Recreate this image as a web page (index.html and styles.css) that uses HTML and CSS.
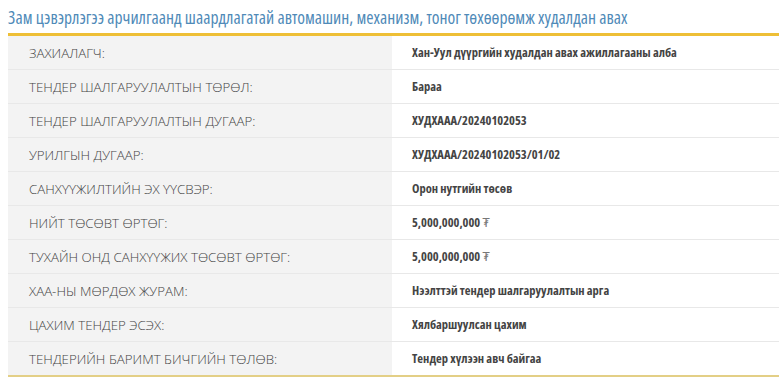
FILE: index.html
```html
<!DOCTYPE html>
<html lang="mn">
<head>
<meta charset="utf-8">
<link rel="stylesheet" href="styles.css">
</head>
<body>
<h2 class="title">Зам цэвэрлэгээ арчилгаанд шаардлагатай автомашин, механизм, тоног төхөөрөмж худалдан авах</h2>
<div class="info">
  <div class="row"><div class="label">ЗАХИАЛАГЧ:</div><div class="value">Хан-Уул дүүргийн худалдан авах ажиллагааны алба</div></div>
  <div class="row"><div class="label">ТЕНДЕР ШАЛГАРУУЛАЛТЫН ТӨРӨЛ:</div><div class="value">Бараа</div></div>
  <div class="row"><div class="label">ТЕНДЕР ШАЛГАРУУЛАЛТЫН ДУГААР:</div><div class="value">ХУДХААА/20240102053</div></div>
  <div class="row"><div class="label">УРИЛГЫН ДУГААР:</div><div class="value">ХУДХААА/20240102053/01/02</div></div>
  <div class="row"><div class="label">САНХҮҮЖИЛТИЙН ЭХ ҮҮСВЭР:</div><div class="value">Орон нутгийн төсөв</div></div>
  <div class="row"><div class="label">НИЙТ ТӨСӨВТ ӨРТӨГ:</div><div class="value">5,000,000,000 <span class="cur">₮</span></div></div>
  <div class="row"><div class="label">ТУХАЙН ОНД САНХҮҮЖИХ ТӨСӨВТ ӨРТӨГ:</div><div class="value">5,000,000,000 <span class="cur">₮</span></div></div>
  <div class="row"><div class="label">ХАА-НЫ МӨРДӨХ ЖУРАМ:</div><div class="value">Нээлттэй тендер шалгаруулалтын арга</div></div>
  <div class="row"><div class="label">ЦАХИМ ТЕНДЕР ЭСЭХ:</div><div class="value">Хялбаршуулсан цахим</div></div>
  <div class="row"><div class="label">ТЕНДЕРИЙН БАРИМТ БИЧГИЙН ТӨЛӨВ:</div><div class="value">Тендер хүлээн авч байгаа</div></div>
</div>
</body>
</html>
```
FILE: styles.css
```css
html, body {
  margin: 0;
  padding: 0;
  background: #ffffff;
}
body {
  padding: 0 0 0 8px;
  font-family: "Open Sans", "DejaVu Sans Condensed", sans-serif;
  font-stretch: 75%;
  overflow: hidden;
}
.title {
  margin: 0;
  padding-top: 7px;
  height: 26px;
  font-size: 17.6px;
  font-weight: 400;
  color: #4f8ab8;
  white-space: nowrap;
  line-height: 20px;
}
.info {
  border-top: 3px solid #eebf36;
  border-bottom: 2px solid #e3cf86;
}
.row {
  display: grid;
  grid-template-columns: 384px 1fr;
  border-top: 1px solid #e8e8e8;
  height: 33px;
}
.row:first-child {
  border-top: none;
}
.label {
  background: #f3f3f3;
  color: #444444;
  font-size: 13.3px;
  font-stretch: 90%;
  font-weight: 300;
  padding-left: 21px;
  display: flex;
  align-items: center;
}
.value {
  background: #ffffff;
  color: #444444;
  font-size: 12.5px;
  font-weight: 700;
  padding-left: 20px;
  display: flex;
  align-items: center;
  white-space: pre;
}
.cur {
  font-weight: 400;
  color: #777777;
}
```
